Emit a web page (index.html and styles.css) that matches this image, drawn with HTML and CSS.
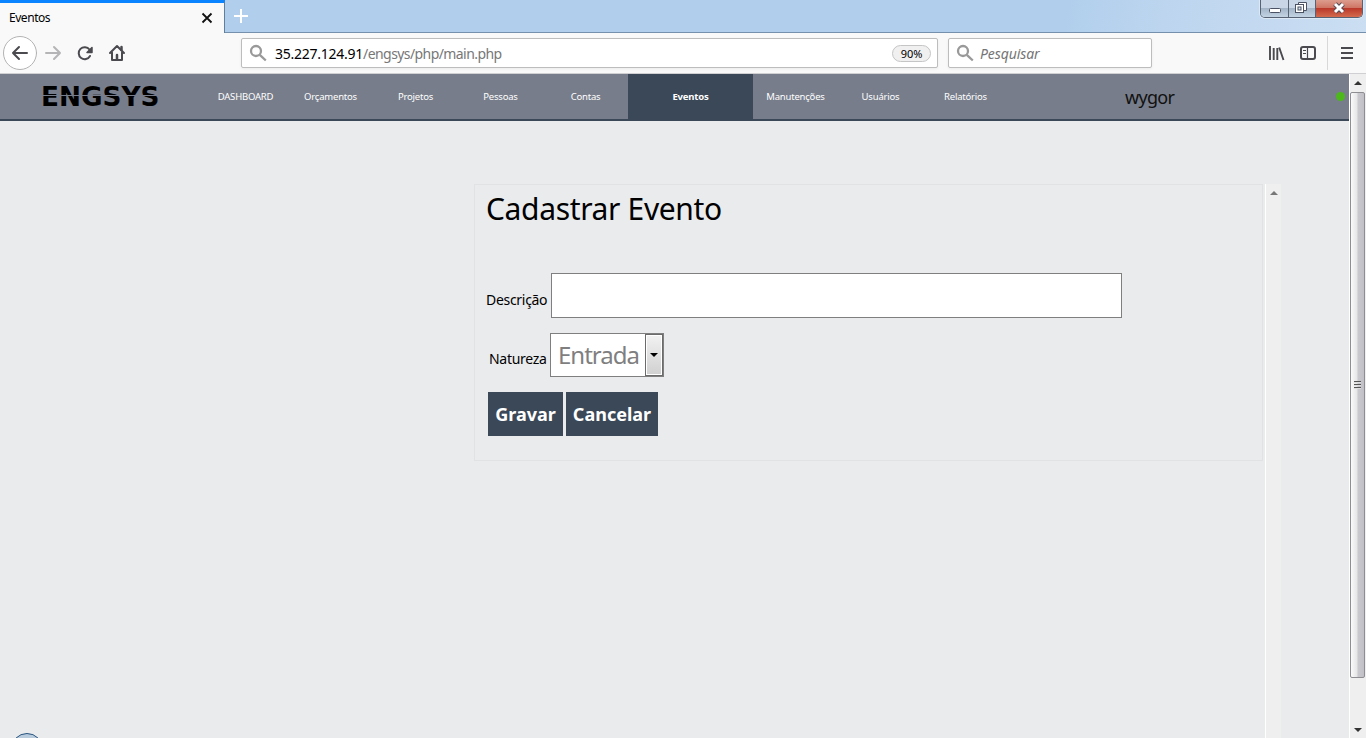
FILE: index.html
```html
<!DOCTYPE html>
<html lang="pt-BR">
<head>
<meta charset="utf-8">
<title>Eventos</title>
<link rel="stylesheet" href="styles.css">
</head>
<body>
<div class="tabstrip">
  <div class="tab"><span class="tab-title">Eventos</span>
    <svg width="12" height="12" viewBox="0 0 12 12"><path d="M1.500 1.500l9 9M10.500 1.500l-9 9" stroke="#111" stroke-width="1.800"/></svg>
  </div>
  <div class="newtab"><svg width="16" height="16" viewBox="0 0 16 16"><path d="M8 1v14M1 8h14" stroke="#fff" stroke-width="2"/></svg></div>
  <div class="winbuttons">
    <span class="wb wb-min"><svg width="28" height="17"><rect x="8.500" y="8.500" width="11" height="4" rx="1" fill="#fff" stroke="#4a5263"/></svg></span>
    <span class="wb wb-max"><svg width="26" height="17"><path d="M9.500 5.500v-3h8v8h-3" fill="#fff" stroke="#4a5263"/><rect x="6.500" y="4.500" width="8" height="8" fill="#fff" stroke="#4a5263"/><rect x="9" y="7" width="3" height="3" fill="#dbe4ee" stroke="#4a5263"/></svg></span>
    <span class="wb wb-close"><svg width="47" height="17"><path d="M19 4l8 8M27 4l-8 8" stroke="#574a55" stroke-width="5"/><path d="M19 4l8 8M27 4l-8 8" stroke="#fff" stroke-width="3"/></svg></span>
  </div>
</div>
<div class="toolbar">
  <svg class="nav-icons" width="130" height="40" viewBox="0 33 130 40" fill="none" stroke="#4a4a4f" stroke-width="2" stroke-linecap="round" stroke-linejoin="round">
    <circle cx="20" cy="53" r="16.500" fill="#fff" stroke="#b3b3b3" stroke-width="1"/>
    <path d="M13 53h14M19 47l-6 6 6 6"/>
    <path d="M46 53h14M54 47l6 6-6 6" stroke="#b5b5b7"/>
    <path d="M90 56a6 6 0 1 1-.5-6.500"/><path d="M92 47.500v5h-5z" fill="#4a4a4f" stroke-width="1.500"/>
    <path d="M110 53l7-7 7 7M112 52.500v7.500h10v-7.500"/><path d="M121.500 47v3M117 59v-4" stroke-width="2.500"/>
  </svg>
  <div class="urlbar"><svg class="lens" width="18" height="18" viewBox="0 0 18 18" fill="none" stroke="#999" stroke-width="2.300"><circle cx="7" cy="7" r="5"/><path d="M10.800 10.800l6 5.700"/></svg><span class="url"><b>35.227.124.91</b>/engsys/php/main.php</span><span class="zoom">90%</span></div>
  <div class="search"><svg class="lens" width="18" height="18" viewBox="0 0 18 18" fill="none" stroke="#999" stroke-width="2.300"><circle cx="7" cy="7" r="5"/><path d="M10.800 10.800l6 5.700"/></svg><span class="hint">Pesquisar</span></div>
  <svg class="tool-icons" width="98" height="40" viewBox="1268 33 98 40" fill="none" stroke="#4a4a4f">
    <path d="M1270 46v14M1273.700 48v12M1277.300 48v12M1279.200 47.500l4.300 12.500" stroke-width="1.900"/>
    <rect x="1301" y="47" width="14" height="12" rx="2" stroke-width="2"/><path d="M1307.500 47v12M1303 50.500h3M1303 53.500h3" stroke-width="1.200"/>
    <path d="M1327.500 36v34" stroke="#d8d8d9"/>
    <path d="M1341 48h12M1341 53h12M1341 58h12" stroke-width="2"/>
  </svg>
</div>
<div class="viewport">
  <div class="page">
    <header class="menu">
      <div class="logo"><span>ENGSYS</span></div>
      <nav>
        <a>DASHBOARD</a><a>Orçamentos</a><a>Projetos</a><a>Pessoas</a><a>Contas</a><a class="active">Eventos</a><a>Manutenções</a><a>Usuários</a><a>Relatórios</a>
      </nav>
      <span class="user">wygor</span>
      <i class="online"></i>
    </header>
    <main>
      <section class="panel">
        <h1>Cadastrar Evento</h1>
        <form>
          <div class="field"><label class="l-desc">Descrição</label><div class="input"></div></div>
          <div class="field nature"><label class="l-nat">Natureza</label><div class="select"><span>Entrada</span><i><svg width="8" height="4"><path d="M0 0h8L4 4z"/></svg></i></div></div>
          <div class="actions"><button class="save" type="button">Gravar</button><button class="cancel" type="button">Cancelar</button></div>
        </form>
      </section>
      <div class="innerbar"><svg width="8" height="4"><path d="M4 0l4 4H0z" fill="#777"/></svg></div>
    </main>
    <div class="orb"></div>
  </div>
  <div class="scrollbar">
    <div class="arrow"><svg width="8" height="4"><path d="M4 0l4 4H0z" fill="#333"/></svg></div>
    <div class="thumb"><i></i><i></i><i></i></div>
    <div class="arrow down"><svg width="8" height="4"><path d="M0 0h8L4 4z" fill="#333"/></svg></div>
  </div>
</div>
</body>
</html>
```
FILE: styles.css
```css
* { box-sizing: border-box; }
body { margin: 0; width: 1366px; height: 738px; overflow: hidden; display: flex; flex-direction: column; font-family: "Noto Sans", sans-serif; color: #000; background: #eaebed; }
svg { display: block; flex: none; }
.tabstrip { height: 33px; flex: none; display: flex; background: linear-gradient(100deg, #b1cfec 0 78%, #bdd5ef 85%, #cbdef2 100%); border-bottom: 1px solid #7590ad; }
.tab { width: 225px; height: 33px; display: flex; align-items: center; justify-content: space-between; padding: 0 11px 1px 9px; background: #f9f9fa; border-top: 3px solid #0a84ff; border-right: 1px solid #5f7f9f; }
.tab-title { font-size: 12px; letter-spacing: -.45px; }
.newtab { padding: 8px; }
.winbuttons { margin-left: auto; margin-right: 3px; display: flex; height: 18px; border: 1px solid #576375; border-top: 0; border-radius: 0 0 5px 5px; overflow: hidden; box-shadow: 0 0 0 1px #dce9f5; }
.wb { background: linear-gradient(#c9d6e5 0 45%, #a4b5c8 50%, #c3d3e4); border-right: 1px solid #576375; }
.wb-min { width: 28px; }
.wb-max { width: 27px; }
.wb-close { width: 46px; border: 0; background: linear-gradient(#dc9c8d 0, #cf7665 45%, #bb392a 50%, #d36a4e); }
.toolbar { height: 41px; flex: none; display: flex; align-items: flex-start; background: #f9f9fa; border-bottom: 1px solid #d0d0d2; }
.urlbar, .search { height: 30px; margin-top: 5px; background: #fff; border: 1px solid #bdbdbe; border-radius: 2px; display: flex; align-items: center; box-shadow: 0 1px 3px rgba(0,0,0,.06); }
.urlbar { width: 697px; margin-left: 111px; padding: 0 6px 0 7px; }
.search { width: 204px; margin-left: 10px; padding-left: 7px; }
.url { margin-left: 8px; font-size: 14px; letter-spacing: -.58px; color: #777; }
.url b { font-weight: 400; color: #000; letter-spacing: -.25px; }
.zoom { margin-left: auto; width: 39px; height: 17px; border: 1px solid #c5c5c5; border-radius: 9px; background: #f0f0f1; font-size: 11px; line-height: 16px; text-align: center; }
.hint { margin-left: 6px; font-size: 14px; font-style: italic; letter-spacing: -.1px; color: #757575; }
.tool-icons { margin-left: auto; }
.viewport { flex: 1; display: flex; min-height: 0; }
.page { width: 1349px; position: relative; display: flex; flex-direction: column; overflow: hidden; }
.menu { height: 47px; flex: none; display: flex; background: #777d8a; border-bottom: 2px solid #3b4857; }
.logo { width: 203px; padding-left: 41px; }
.logo span { display: block; width: 118px; position: relative; font: bold 26px/47px "DejaVu Sans", sans-serif; transform: scaleX(1.01); transform-origin: 0 0; }
.logo span::after { content: ""; position: absolute; left: 0; top: 21px; width: 118px; height: 1px; background: #777d8a; }
nav { display: flex; width: 806px; }
nav a { width: 85px; text-align: center; color: #fff; font-size: 9.500px; line-height: 45px; letter-spacing: -.2px; }
nav .active { width: 125px; background: #3b4857; font-weight: 700; }
.user { margin-left: 116px; font-size: 18px; line-height: 46px; letter-spacing: -.7px; color: #111; }
.online { margin: 18px 4px 0 auto; width: 9px; height: 9px; border-radius: 50%; background: #4cb81c; }
main { flex: 1; display: flex; align-items: flex-start; padding: 63px 0 0 474px; }
.panel { width: 789px; height: 277px; border: 1px solid #e1e2e4; padding: 6px 0 0 11px; }
h1 { margin: 0; font-size: 30px; line-height: 36px; font-weight: 400; letter-spacing: -.35px; }
form { padding-top: 46px; }
.field { display: flex; height: 45px; }
label { width: 65px; flex: none; font-size: 14px; line-height: 54px; letter-spacing: -.3px; }
.input { width: 571px; height: 45px; background: #fff; border: 1px solid #7f7f7f; }
.nature { margin-top: 15px; height: 44px; }
.l-nat { width: 64px; padding-left: 3px; line-height: 52px; }
.select { width: 114px; height: 44px; border: 1px solid #7f7f7f; background: #fff; display: flex; align-items: center; justify-content: space-between; }
.select span { width: 94px; padding-left: 7px; font-size: 24px; line-height: 42px; letter-spacing: -1px; color: #7f7f7f; }
.select i { width: 18px; height: 42px; flex: none; display: flex; align-items: center; justify-content: center; border: 1px solid #6b6b6b; box-shadow: inset 0 0 0 1px #fff; background: linear-gradient(#f2f2f2, #d0d0d0); }
.actions { display: flex; gap: 3px; margin: 15px 0 0 2px; }
button { height: 44px; padding: 0; border: 0; background: #3b4857; color: #fff; font: bold 18px "Noto Sans", sans-serif; }
.save { width: 75px; }
.cancel { width: 92px; }
.innerbar { width: 16px; height: 554px; margin-left: 2px; padding: 7px 0 0 4px; background: #efefef; border-left: 1px solid #fff; }
.orb { position: absolute; left: 11px; top: 659px; width: 32px; height: 32px; border-radius: 50%; border: 1px solid #285480; background: #b8cbdc; }
.scrollbar { width: 17px; display: flex; flex-direction: column; background: #efefef; border-left: 1px solid #fff; }
.arrow { height: 18px; padding: 7px 0 0 4px; }
.down { margin-top: auto; height: 10px; padding-top: 0; }
.thumb { width: 15px; height: 586px; border: 1px solid #8e8e92; border-radius: 2px; background: linear-gradient(90deg, #fafafa, #e5e5e7 48%, #c9c9ce 52%, #c0c0c7); display: flex; flex-direction: column; justify-content: center; align-items: center; gap: 1px; }
.thumb i { width: 7px; height: 2px; background: #555; border-bottom: 1px solid #ddd; }
```
